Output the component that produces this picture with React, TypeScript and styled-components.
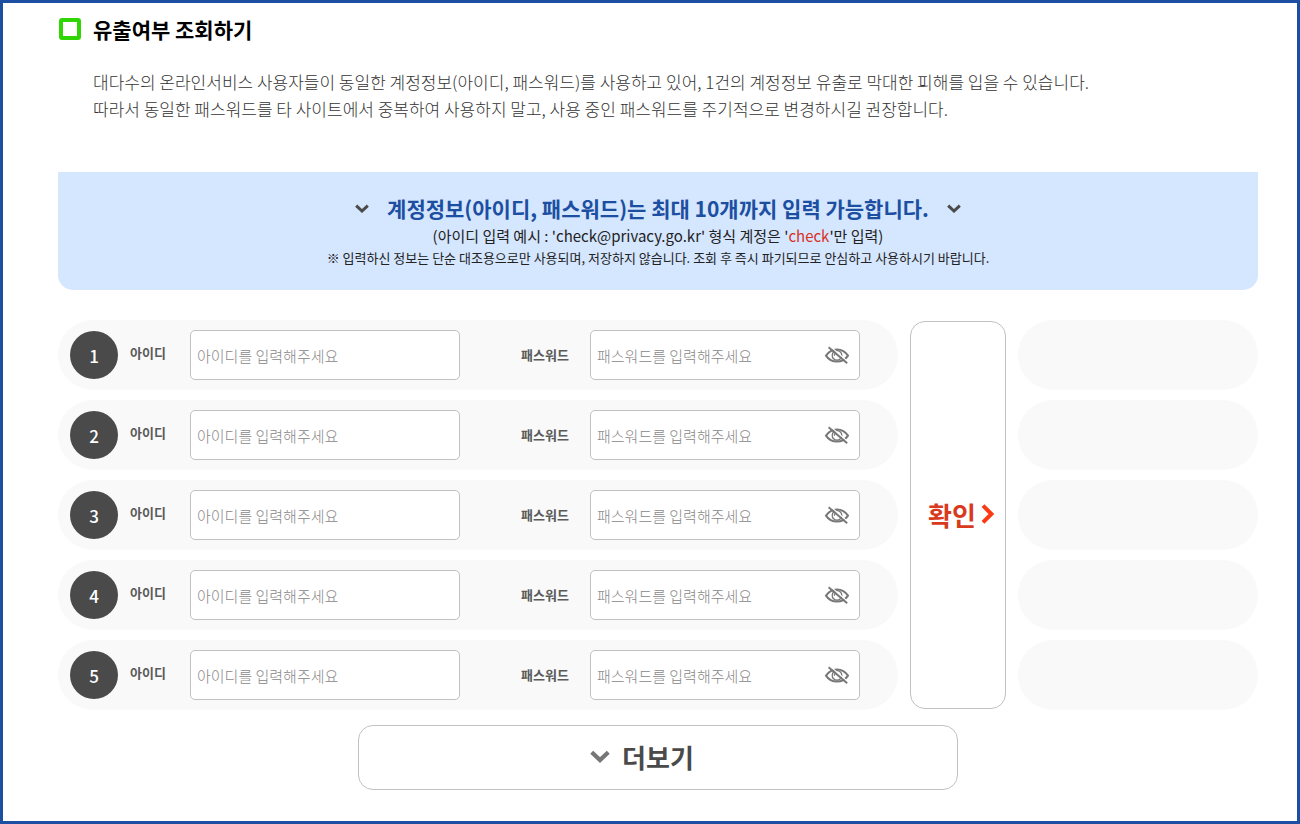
import React from "react";
import styled, { createGlobalStyle } from "styled-components";

const GlobalStyle = createGlobalStyle`
  *, *::before, *::after { box-sizing: border-box; }
  body {
    margin: 0;
    background: #fff;
    color: #222;
    font-family: "Noto Sans CJK KR", "Noto Sans", sans-serif;
  }
  button, input { font-family: inherit; }
  h1, h2, p { margin: 0; }
`;

const Page = styled.main`
  min-height: 100vh;
  border: 3px solid #1c4fa1;
  padding: 11px 39px 31px 55px;
`;

const TitleRow = styled.header`
  display: flex;
  align-items: center;
  gap: 12px;
  padding-left: 1px;
`;

const TitleMark = styled.span`
  width: 22px;
  height: 22px;
  border: 4px solid #30d505;
  border-radius: 3px;
`;

const Title = styled.h1`
  font-size: 21px;
  line-height: 30px;
  font-weight: 700;
  color: #000;
`;

const Description = styled.p`
  margin-top: 24px;
  padding-left: 35px;
  font-size: 17px;
  line-height: 27px;
  font-weight: 300;
  color: #333;
`;

const Notice = styled.section`
  margin-top: 50px;
  padding: 20px 16px;
  min-height: 118px;
  border-radius: 0 0 15px 15px;
  background: #d5e6ff;
  text-align: center;
`;

const NoticeTitle = styled.h2`
  display: flex;
  align-items: center;
  justify-content: center;
  gap: 18px;
  font-size: 21px;
  line-height: 32px;
  font-weight: 700;
  color: #1c4fa1;
`;

const NoticeExample = styled.p`
  font-size: 15px;
  line-height: 24px;
`;

const NoticeNote = styled.p`
  font-size: 13px;
  line-height: 20px;
`;

const Accent = styled.span`
  color: #d8301e;
`;

const Form = styled.form`
  margin-top: 30px;
`;

const Columns = styled.div`
  display: grid;
  grid-template-columns: minmax(0, 1fr) 96px 20%;
  gap: 12px;
`;

const Stack = styled.div`
  display: flex;
  flex-direction: column;
  gap: 10px;
`;

const AccountRow = styled.div`
  display: flex;
  align-items: center;
  height: 70px;
  padding: 0 38px 0 12px;
  border-radius: 35px;
  background: #f9f9f9;
`;

const ResultSlot = styled.div`
  height: 70px;
  border-radius: 35px;
  background: #f9f9f9;
`;

const Badge = styled.span`
  display: flex;
  align-items: center;
  justify-content: center;
  flex: none;
  width: 48px;
  height: 48px;
  border-radius: 50%;
  background: #4a4a4a;
  color: #fff;
  font-size: 17px;
  font-weight: 500;
`;

const Label = styled.label<{ $kind: "id" | "password" }>`
  flex: none;
  width: ${(p) => (p.$kind === "id" ? 72 : 130)}px;
  padding: ${(p) => (p.$kind === "id" ? "0 0 4px 12px" : "0 0 0 61px")};
  font-size: 13px;
  line-height: 20px;
  font-weight: 700;
  color: #5a5a5a;
  white-space: nowrap;
`;

const Field = styled.div`
  display: flex;
  align-items: center;
  flex: 1;
  min-width: 0;
  height: 50px;
  padding: 0 9px 0 6px;
  border: 1px solid #c1c1c1;
  border-radius: 5px;
  background: #fff;
`;

const TextInput = styled.input`
  flex: 1;
  min-width: 0;
  height: 48px;
  padding: 0;
  border: 0;
  outline: 0;
  background: transparent;
  font-size: 15px;
  font-weight: 300;
  color: #333;
  &::placeholder { color: #888; opacity: 1; }
`;

const IconButton = styled.button`
  display: flex;
  flex: none;
  padding: 0;
  border: 0;
  background: none;
  color: #777;
  cursor: pointer;
`;

const OutlineButton = styled.button`
  display: flex;
  align-items: center;
  justify-content: center;
  border: 1px solid #c1c1c1;
  border-radius: 15px;
  background: #fff;
  font-size: 26px;
  font-weight: 700;
  cursor: pointer;
`;

const ConfirmButton = styled(OutlineButton)`
  gap: 5px;
  margin: 1px 0;
  padding: 0 0 2px 7px;
  color: #d83a1e;
`;

const MoreButton = styled(OutlineButton)`
  gap: 12px;
  width: 50%;
  height: 65px;
  margin: 15px auto 0;
  padding: 0 32px 2px 0;
  color: #4a4a4a;
`;

const ChevronDown = ({ width, color }: { width: number; color: string }) => (
  <svg width={width} height={(width * 9) / 14} viewBox="0 0 14 9" fill="none" stroke={color} strokeWidth="3" aria-hidden="true">
    <path d="M1.2 1.6 7 7l5.8-5.4" />
  </svg>
);

const ChevronRight = () => (
  <svg width="14" height="20" viewBox="0 0 14 20" fill="none" stroke="#fb3a14" strokeWidth="4" aria-hidden="true">
    <path d="M2 1.6 10.4 10 2 18.4" />
  </svg>
);

const HiddenEye = () => (
  <svg width="26" height="18" viewBox="0 0 26 18" fill="none" stroke="currentColor" aria-hidden="true">
    <path d="M2 9.6C4.6 5.600 8.500 3.400 13 3.400s8.400 2.200 11 6.200C21.400 13.600 17.500 15.600 13 15.600S4.600 13.600 2 9.600Z" strokeWidth="2" />
    <circle cx="13" cy="9.400" r="4.800" strokeWidth="1.300" />
    <path d="M10.300 9.800c0-1.600.9-2.600 2.300-2.700" strokeWidth="1.200" />
    <path d="M6.600.6 24.400 16.200" stroke="#fff" strokeWidth="1.200" />
    <path d="M4.600 1.200 23.200 17.200" strokeWidth="1.900" />
  </svg>
);

const rows = [1, 2, 3, 4, 5];

export default function App() {
  return (
    <>
      <GlobalStyle />
      <Page>
        <TitleRow>
          <TitleMark />
          <Title>유출여부 조회하기</Title>
        </TitleRow>
        <Description>
          대다수의 온라인서비스 사용자들이 동일한 계정정보(아이디, 패스워드)를 사용하고 있어, 1건의 계정정보 유출로 막대한 피해를 입을 수 있습니다.
          <br />
          따라서 동일한 패스워드를 타 사이트에서 중복하여 사용하지 말고, 사용 중인 패스워드를 주기적으로 변경하시길 권장합니다.
        </Description>
        <Notice>
          <NoticeTitle>
            <ChevronDown width={14} color="#4a4a4a" />
            <span>계정정보(아이디, 패스워드)는 최대 10개까지 입력 가능합니다.</span>
            <ChevronDown width={14} color="#4a4a4a" />
          </NoticeTitle>
          <NoticeExample>
            (아이디 입력 예시 : 'check@privacy.go.kr' 형식 계정은 '<Accent>check</Accent>'만 입력)
          </NoticeExample>
          <NoticeNote>
            ※ 입력하신 정보는 단순 대조용으로만 사용되며, 저장하지 않습니다. 조회 후 즉시 파기되므로 안심하고 사용하시기 바랍니다.
          </NoticeNote>
        </Notice>
        <Form onSubmit={(e) => e.preventDefault()}>
          <Columns>
            <Stack>
              {rows.map((n) => (
                <AccountRow key={n}>
                  <Badge>{n}</Badge>
                  <Label $kind="id" htmlFor={`id-${n}`}>아이디</Label>
                  <Field>
                    <TextInput id={`id-${n}`} type="text" placeholder="아이디를 입력해주세요" />
                  </Field>
                  <Label $kind="password" htmlFor={`password-${n}`}>패스워드</Label>
                  <Field>
                    <TextInput id={`password-${n}`} type="password" placeholder="패스워드를 입력해주세요" />
                    <IconButton type="button" aria-label="패스워드 표시">
                      <HiddenEye />
                    </IconButton>
                  </Field>
                </AccountRow>
              ))}
            </Stack>
            <ConfirmButton type="submit">
              확인
              <ChevronRight />
            </ConfirmButton>
            <Stack>
              {rows.map((n) => (
                <ResultSlot key={n} />
              ))}
            </Stack>
          </Columns>
          <MoreButton type="button">
            <ChevronDown width={20} color="#777" />
            더보기
          </MoreButton>
        </Form>
      </Page>
    </>
  );
}
